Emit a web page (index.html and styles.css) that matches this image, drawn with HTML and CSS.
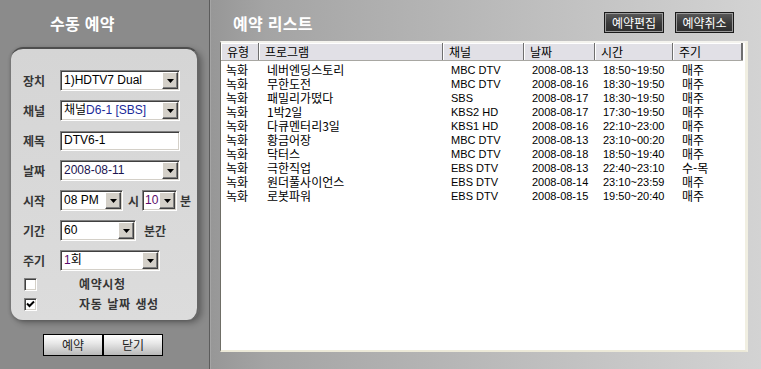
FILE: index.html
```html
<!DOCTYPE html>
<html lang="ko">
<head>
<meta charset="utf-8">
<title>예약</title>
<link rel="stylesheet" href="styles.css">
</head>
<body>
<div class="app">
  <aside class="left">
    <h1 class="ltitle">수동 예약</h1>
    <div class="card">
      <div class="row">
        <span class="lbl">장치</span>
        <div class="sel w120"><span class="val">1)HDTV7 Dual</span><span class="dd"><svg width="7" height="4" viewBox="0 0 7 4"><path d="M0 0h7L3.5 4z" fill="#000"/></svg></span></div>
      </div>
      <div class="row">
        <span class="lbl">채널</span>
        <div class="sel w120"><span class="val">채널<span class="blue">D6-1 [SBS]</span></span><span class="dd"><svg width="7" height="4" viewBox="0 0 7 4"><path d="M0 0h7L3.5 4z" fill="#000"/></svg></span></div>
      </div>
      <div class="row">
        <span class="lbl">제목</span>
        <div class="inp w120"><span class="val">DTV6-1</span></div>
      </div>
      <div class="row">
        <span class="lbl">날짜</span>
        <div class="sel w120"><span class="val navy">2008-08-11</span><span class="dd"><svg width="7" height="4" viewBox="0 0 7 4"><path d="M0 0h7L3.5 4z" fill="#000"/></svg></span></div>
      </div>
      <div class="row">
        <span class="lbl">시작</span>
        <div class="sel w63"><span class="val">08 PM</span><span class="dd"><svg width="7" height="4" viewBox="0 0 7 4"><path d="M0 0h7L3.5 4z" fill="#000"/></svg></span></div>
        <span class="unit u-si">시</span>
        <div class="sel w35"><span class="val purple">10</span><span class="dd"><svg width="7" height="4" viewBox="0 0 7 4"><path d="M0 0h7L3.5 4z" fill="#000"/></svg></span></div>
        <span class="unit u-bun">분</span>
      </div>
      <div class="row">
        <span class="lbl">기간</span>
        <div class="sel w76"><span class="val">60</span><span class="dd"><svg width="7" height="4" viewBox="0 0 7 4"><path d="M0 0h7L3.5 4z" fill="#000"/></svg></span></div>
        <span class="unit u-bungan">분간</span>
      </div>
      <div class="row">
        <span class="lbl">주기</span>
        <div class="sel w100"><span class="val"><span class="purple">1</span>회</span><span class="dd"><svg width="7" height="4" viewBox="0 0 7 4"><path d="M0 0h7L3.5 4z" fill="#000"/></svg></span></div>
      </div>
      <div class="chk first">
        <span class="box"></span>
        <span class="clbl">예약시청</span>
      </div>
      <div class="chk">
        <span class="box"><svg width="9" height="8" viewBox="0 0 9 8"><path d="M1 3.5l2.5 2.5L8 1.5" fill="none" stroke="#000" stroke-width="2"/></svg></span>
        <span class="clbl">자동 날짜 생성</span>
      </div>
    </div>
    <div class="lbtns">
      <button class="lbtn">예약</button>
      <button class="lbtn">닫기</button>
    </div>
  </aside>
  <div class="divider"></div>
  <main class="right">
    <div class="rhead">
      <h1 class="rtitle">예약 리스트</h1>
      <div class="rbtns">
        <button class="dbtn">예약편집</button>
        <button class="dbtn">예약취소</button>
      </div>
    </div>
    <div class="list">
      <div class="thead">
        <span class="th">유형</span>
        <span class="th">프로그램</span>
        <span class="th">채널</span>
        <span class="th">날짜</span>
        <span class="th">시간</span>
        <span class="th">주기</span>
      </div>
      <div class="tbody">
        <div class="tr"><span class="td ko">녹화</span><span class="td ko">네버엔딩스토리</span><span class="td la">MBC DTV</span><span class="td la">2008-08-13</span><span class="td la">18:50~19:50</span><span class="td ko">매주</span></div>
        <div class="tr"><span class="td ko">녹화</span><span class="td ko">무한도전</span><span class="td la">MBC DTV</span><span class="td la">2008-08-16</span><span class="td la">18:30~19:50</span><span class="td ko">매주</span></div>
        <div class="tr"><span class="td ko">녹화</span><span class="td ko">패밀리가떴다</span><span class="td la">SBS</span><span class="td la">2008-08-17</span><span class="td la">18:30~19:50</span><span class="td ko">매주</span></div>
        <div class="tr"><span class="td ko">녹화</span><span class="td ko">1박2일</span><span class="td la">KBS2 HD</span><span class="td la">2008-08-17</span><span class="td la">17:30~19:50</span><span class="td ko">매주</span></div>
        <div class="tr"><span class="td ko">녹화</span><span class="td ko">다큐멘터리3일</span><span class="td la">KBS1 HD</span><span class="td la">2008-08-16</span><span class="td la">22:10~23:00</span><span class="td ko">매주</span></div>
        <div class="tr"><span class="td ko">녹화</span><span class="td ko">황금어장</span><span class="td la">MBC DTV</span><span class="td la">2008-08-13</span><span class="td la">23:10~00:20</span><span class="td ko">매주</span></div>
        <div class="tr"><span class="td ko">녹화</span><span class="td ko">닥터스</span><span class="td la">MBC DTV</span><span class="td la">2008-08-18</span><span class="td la">18:50~19:40</span><span class="td ko">매주</span></div>
        <div class="tr"><span class="td ko">녹화</span><span class="td ko">극한직업</span><span class="td la">EBS DTV</span><span class="td la">2008-08-13</span><span class="td la">22:40~23:10</span><span class="td ko">수-목</span></div>
        <div class="tr"><span class="td ko">녹화</span><span class="td ko">원더풀사이언스</span><span class="td la">EBS DTV</span><span class="td la">2008-08-14</span><span class="td la">23:10~23:59</span><span class="td ko">매주</span></div>
        <div class="tr"><span class="td ko">녹화</span><span class="td ko">로봇파워</span><span class="td la">EBS DTV</span><span class="td la">2008-08-15</span><span class="td la">19:50~20:40</span><span class="td ko">매주</span></div>
      </div>
    </div>
  </main>
</div>
</body>
</html>
```

FILE: styles.css
```css
* { box-sizing: border-box; }
html, body { margin: 0; padding: 0; }
body {
  width: 761px;
  height: 369px;
  overflow: hidden;
  font-family: "Liberation Sans", "Noto Sans CJK KR", sans-serif;
  background: #8c8c8c;
}
.app { display: flex; height: 369px; }

/* ---------- left panel ---------- */
.left {
  width: 209px;
  flex: none;
  background: #8b8b8b;
  display: flex;
  flex-direction: column;
}
.ltitle {
  margin: 0;
  height: 47px;
  padding: 12px 0 0 50px;
  font: bold 16px/22px "Noto Sans CJK KR", sans-serif;
  color: #fff;
  letter-spacing: 0.3px;
}
.card {
  margin-left: 11px;
  width: 188px;
  height: 273px;
  background: linear-gradient(#d5d5d5, #dcdcdc);
  border-radius: 12px;
  border-top: 2px solid #4e4e4e;
  border-right: 2px solid #666;
  box-shadow: 3px 3px 6px rgba(0,0,0,0.3), -1px 1px 3px rgba(0,0,0,0.15);
  padding: 21px 0 0 11px;
  display: flex;
  flex-direction: column;
}
.row {
  display: flex;
  align-items: center;
  height: 21px;
  margin-bottom: 9px;
}
.lbl {
  width: 38px;
  padding-left: 1px;
  font: bold 12px/21px "Noto Sans CJK KR", sans-serif;
  color: #363636;
}
.sel, .inp {
  position: relative;
  height: 21px;
  background: #fff;
  border: 1px solid;
  border-color: #808080 #fff #fff #808080;
  box-shadow: inset 1px 1px #404040, inset -1px -1px #d4d0c8;
  display: flex;
  align-items: center;
}
.inp { height: 20px; }
.w120 { width: 120px; }
.w100 { width: 100px; }
.w76 { width: 76px; }
.w63 { width: 63px; }
.w35 { width: 35px; }
.val {
  flex: 1;
  min-width: 0;
  padding-left: 3px;
  font: 12px/17px "Liberation Sans", "Noto Sans CJK KR", sans-serif;
  color: #000;
  white-space: nowrap;
  overflow: hidden;
}
.w35 .val { padding-left: 2px; }
.blue { color: #1a2a9a; }
.navy { color: #1a1450; }
.purple { color: #5a0a6a; }
.dd {
  flex: none;
  width: 16px;
  height: 17px;
  margin-right: 1px;
  background: #d4d0c8;
  border: 1px solid;
  border-color: #fff #404040 #404040 #fff;
  box-shadow: inset -1px -1px #808080;
  display: flex;
  align-items: center;
  justify-content: center;
}
.unit {
  font: bold 12px/21px "Noto Sans CJK KR", sans-serif;
  color: #363636;
}
.u-si { margin: 0 3px 0 5px; }
.u-bun { margin-left: 3px; }
.u-bungan { margin-left: 8px; }

.chk {
  display: flex;
  align-items: center;
  height: 12px;
  margin-bottom: 8px;
}
.chk.first { margin-top: -2px; }
.box {
  width: 13px;
  height: 13px;
  margin-left: 2px;
  background: #fff;
  border: 1px solid;
  border-color: #808080 #fff #fff #808080;
  box-shadow: inset 1px 1px #404040, inset -1px -1px #d4d0c8;
  display: flex;
  align-items: center;
  justify-content: center;
}
.clbl {
  margin-left: 42px;
  font: bold 12px/14px "Noto Sans CJK KR", sans-serif;
  color: #363636;
  letter-spacing: 0.6px;
  word-spacing: 1px;
}

.lbtns {
  display: flex;
  margin: 14px 0 0 43px;
}
.lbtn {
  width: 60px;
  height: 22px;
  padding: 0;
  border: 1px solid #000;
  background: linear-gradient(#ffffff, #e8e8e8 40%, #b9b9b9);
  font: 12px/20px "Noto Sans CJK KR", sans-serif;
  color: #222;
}

/* ---------- divider ---------- */
.divider {
  width: 2px;
  flex: none;
  background: #5c5c5c;
  border-right: 1px solid #a5a5a5;
}

/* ---------- right panel ---------- */
.right {
  flex: 1;
  background: linear-gradient(to right, #979797, #a4a4a4 10%, #c4c4c4 70%, #d3d3d3);
  padding: 0 13px 0 9px;
  display: flex;
  flex-direction: column;
}
.rhead {
  height: 41px;
  display: flex;
  justify-content: space-between;
  align-items: flex-start;
}
.rtitle {
  margin: 12px 0 0 13px;
  font: bold 16px/22px "Noto Sans CJK KR", sans-serif;
  color: #fff;
  letter-spacing: 0.3px;
}
.rbtns {
  display: flex;
  gap: 11px;
  margin: 12px 14px 0 0;
}
.dbtn {
  width: 60px;
  height: 21px;
  padding: 0;
  border: 1px solid #1a1a1a;
  box-shadow: inset 0 0 0 1px #9a9a9a;
  background: linear-gradient(#5a5a5a, #3a3a3a 55%, #2e2e2e);
  font: 12px/19px "Noto Sans CJK KR", sans-serif;
  color: #fff;
}
.dbtn + .dbtn { width: 59px; }

.list {
  height: 311px;
  background: #fff;
  border-style: solid;
  border-width: 2px 3px 2px 1px;
  border-color: #f4f3ee #f1efe2 #ece9d8 #6f6e66;
  display: flex;
  flex-direction: column;
}
.thead {
  display: grid;
  grid-template-columns: 38px 184px 81px 71px 78px 70px;
  height: 18px;
  background: #e1e0e6;
  border-bottom: 1px solid #a8a7a2;
  width: 522px;
}
.th {
  font: 12px/17px "Noto Sans CJK KR", sans-serif;
  color: #000;
  padding-left: 6px;
  border-right: 1px solid #6f6f6f;
  box-shadow: inset 1px 1px #fff;
}
.th:last-child { border-right: 2px solid #6f6f6f; }
.tbody { padding-top: 2px; }
.tr {
  display: grid;
  grid-template-columns: 38px 184px 81px 71px 78px 70px;
  height: 14px;
}
.td {
  padding-left: 7px;
  color: #000;
  white-space: nowrap;
}
.td.ko { font: 12px/14px "Noto Sans CJK KR", sans-serif; }
.td.la { font: 11px/14px "Liberation Sans", "Noto Sans CJK KR", sans-serif; padding-left: 8px; }
.tr .td:first-child { padding-left: 5px; }
.tr .td:nth-child(2) { padding-left: 8px; }
.tr .td:last-child { padding-left: 9px; }
```
